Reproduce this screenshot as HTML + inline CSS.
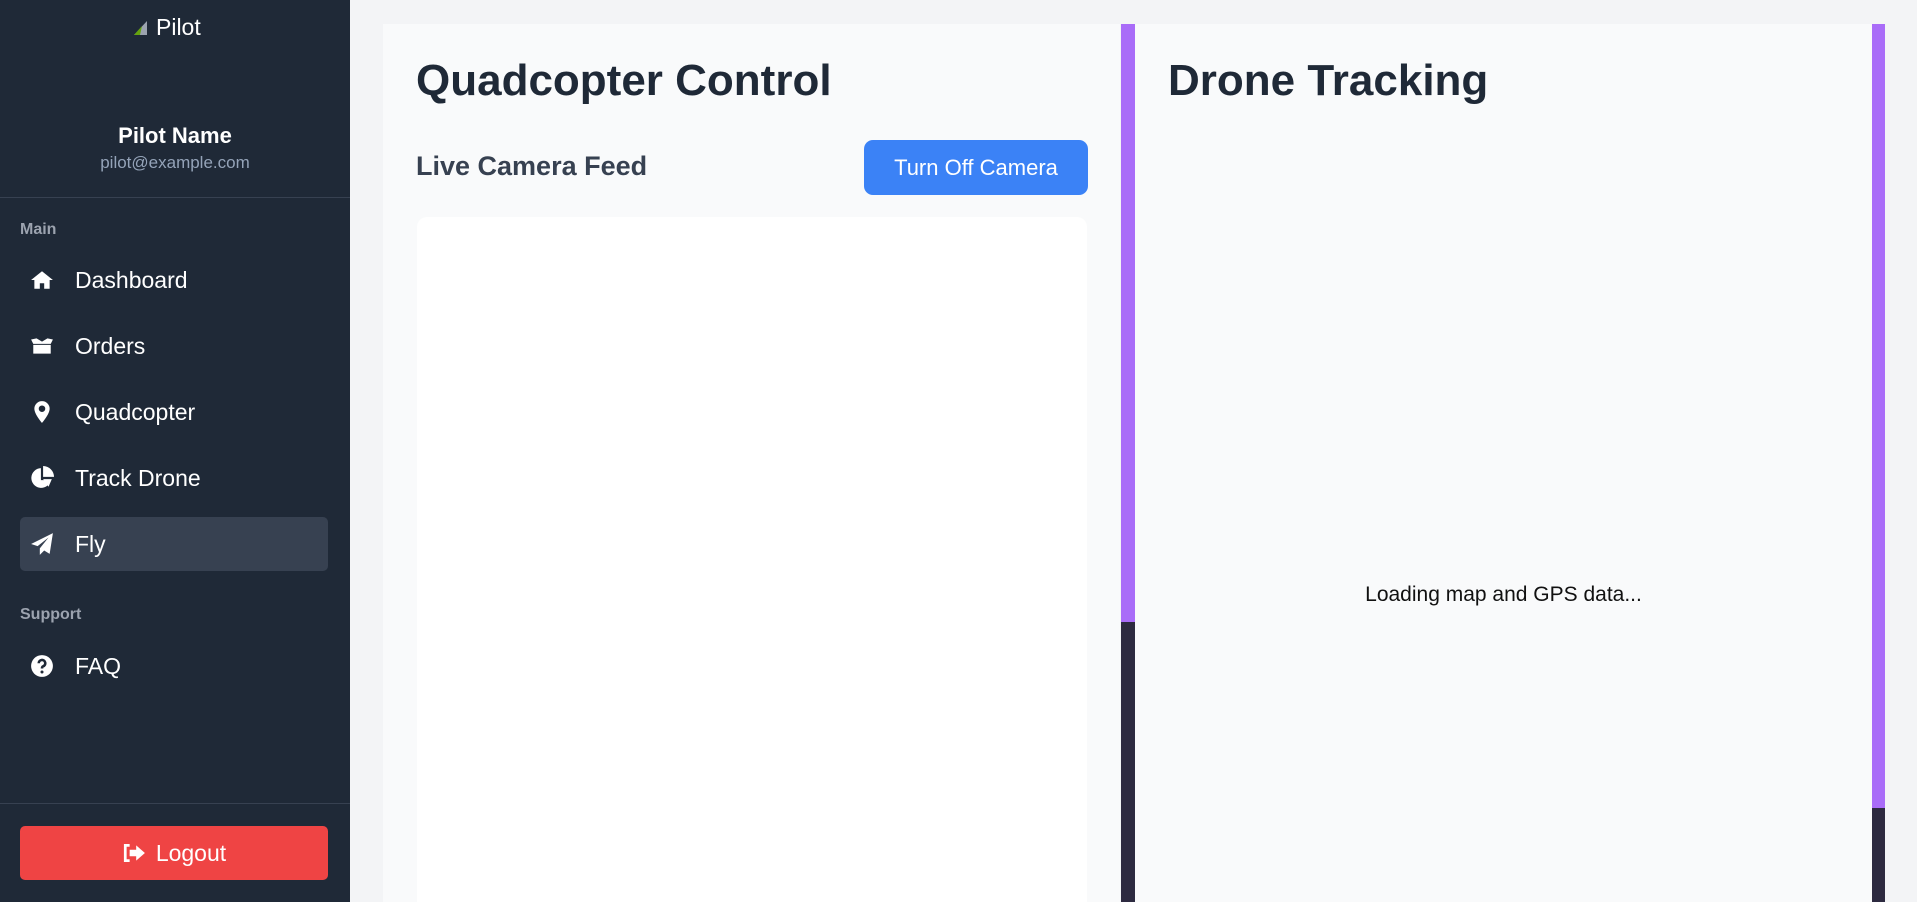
<!DOCTYPE html>
<html style="overflow:hidden;height:902px"><head><meta charset="utf-8"><style>
*{box-sizing:border-box;margin:0;padding:0}
body{width:1917px;height:902px;overflow:hidden;background:#f3f4f6;font-family:"Liberation Sans",sans-serif;position:relative}
.sb{position:absolute;left:0;top:0;width:350px;height:902px;background:#1f2937;color:#fff}
.abs{position:absolute}
.nav{position:absolute;left:20px;width:308px;height:54px;display:flex;align-items:center;font-size:23px;color:#fff}
.nav svg{position:absolute;left:22px;top:50%;transform:translate(-50%,-50%)}
.nav span{position:absolute;left:55px}
.sec{position:absolute;left:20px;font-size:16px;font-weight:bold;color:#9ca3af}
</style></head><body>
<div class="sb">
  <div class="abs" style="left:134px;top:14px;font-size:23px;color:#fff;display:flex;align-items:center;gap:8px">
    <svg width="14" height="14" viewBox="0 0 14 14"><path d="M13 0L0 14h13z" fill="#9ca3af"/><path d="M8 5L0 14h6z" fill="#65a30d"/></svg>Pilot</div>
  <div class="abs" style="left:0;width:350px;text-align:center;top:123px;font-size:22px;font-weight:bold">Pilot Name</div>
  <div class="abs" style="left:0;width:350px;text-align:center;top:153px;font-size:17px;color:#94a3b8">pilot@example.com</div>
  <div class="abs" style="left:0;top:197px;width:350px;height:1px;background:#374151"></div>
  <div class="sec" style="top:221px">Main</div>
  <div class="nav" style="top:253px"><svg width="24" height="20" viewBox="0 0 22 18"><path d="M11 1L1 9h3v8h5v-5h4v5h5V9h3z" fill="#fff"/></svg><span>Dashboard</span></div>
  <div class="nav" style="top:319px"><svg width="24" height="18" viewBox="0 0 22 16"><path d="M1 2l5 -1 5 3 5-3 5 1-2 4H3zM3 7h16v8H3z" fill="#fff"/></svg><span>Orders</span></div>
  <div class="nav" style="top:385px"><svg width="18" height="24" viewBox="0 0 16 22"><path d="M8 1a7 7 0 0 0-7 7c0 5 7 13 7 13s7-8 7-13a7 7 0 0 0-7-7zm0 4a3 3 0 1 1 0 6 3 3 0 0 1 0-6z" fill="#fff" fill-rule="evenodd"/></svg><span>Quadcopter</span></div>
  <div class="nav" style="top:451px"><svg width="24" height="24" viewBox="0 0 22 22"><path d="M10 2a9 9 0 1 0 9 11h-9z" fill="#fff"/><path d="M12 0v10h10A10 10 0 0 0 12 0z" fill="#fff"/><path d="M12 12h8l-3 7z" fill="#fff"/></svg><span>Track Drone</span></div>
  <div class="nav" style="top:517px;background:#374151;border-radius:5px"><svg width="24" height="24" viewBox="0 0 22 22"><path d="M21 1L1 11l6 2 10-8-8 10v6l4-4 5 3z" fill="#fff"/></svg><span>Fly</span></div>
  <div class="sec" style="top:606px">Support</div>
  <div class="nav" style="top:639px"><svg width="24" height="24" viewBox="0 0 22 22"><circle cx="11" cy="11" r="10" fill="#fff"/><path d="M8 8.5a3 3 0 1 1 4 2.8c-1 .4-1 1-1 2" stroke="#1f2937" stroke-width="2.4" fill="none"/><circle cx="11" cy="16.5" r="1.4" fill="#1f2937"/></svg><span>FAQ</span></div>
  <div class="abs" style="left:0;top:803px;width:350px;height:1px;background:#374151"></div>
  <div class="abs" style="left:20px;top:826px;width:308px;height:54px;background:#ef4444;border-radius:5px;display:flex;align-items:center;justify-content:center;gap:10px;font-size:23px">
    <svg width="24" height="20" viewBox="0 0 22 18"><path d="M7 2H3v14h4" stroke="#fff" stroke-width="2.5" fill="none"/><path d="M7 6h6V2l8 7-8 7v-4H7z" fill="#fff"/></svg>Logout</div>
</div>
<div class="abs" style="left:383px;top:24px;width:737px;height:878px;background:#f9fafb"></div>
<div class="abs" style="left:416px;top:56px;font-size:44px;font-weight:bold;color:#1f2937">Quadcopter Control</div>
<div class="abs" style="left:416px;top:151px;font-size:27px;font-weight:bold;color:#374151">Live Camera Feed</div>
<div class="abs" style="left:864px;top:140px;width:224px;height:55px;background:#3b82f6;border-radius:9px;color:#fff;font-size:22px;display:flex;align-items:center;justify-content:center">Turn Off Camera</div>
<div class="abs" style="left:417px;top:217px;width:670px;height:685px;background:#fff;border-radius:10px 10px 0 0"></div>
<div class="abs" style="left:1121px;top:24px;width:14px;height:598px;background:#a96cf8"></div>
<div class="abs" style="left:1121px;top:622px;width:14px;height:280px;background:#2d2a40"></div>
<div class="abs" style="left:1135px;top:24px;width:737px;height:878px;background:#f9fafb"></div>
<div class="abs" style="left:1168px;top:56px;font-size:44px;font-weight:bold;color:#1f2937">Drone Tracking</div>
<div class="abs" style="left:1135px;width:737px;top:583px;text-align:center;font-size:21px;color:#111">Loading map and GPS data...</div>
<div class="abs" style="left:1872px;top:24px;width:13px;height:784px;background:#a96cf8"></div>
<div class="abs" style="left:1872px;top:808px;width:13px;height:94px;background:#2d2a40"></div>
</body></html>
